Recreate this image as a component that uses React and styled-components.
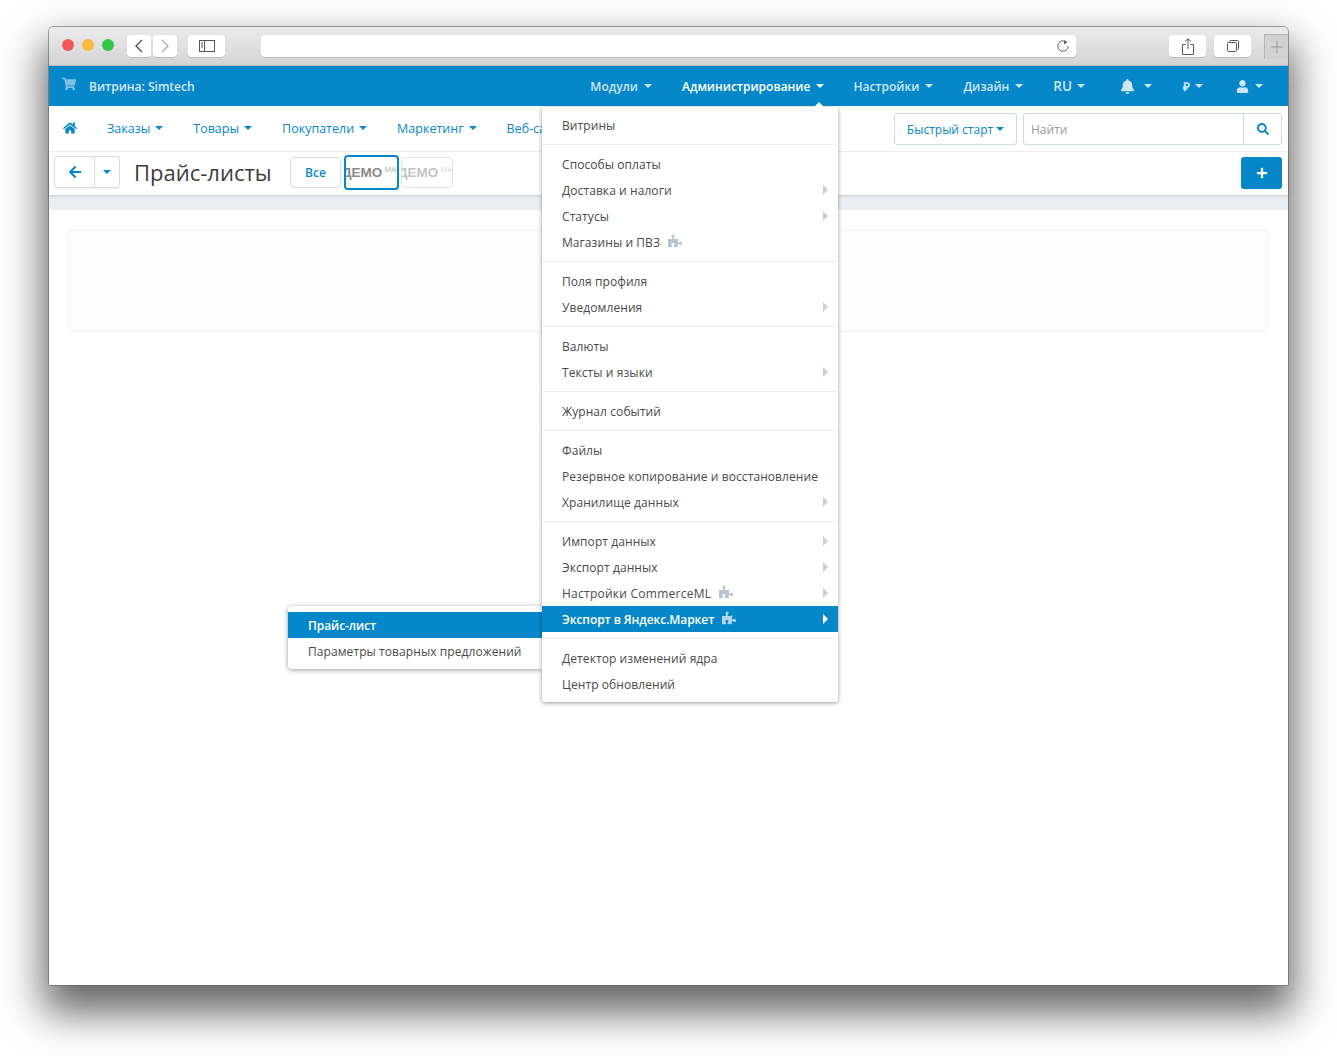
import React from "react";
import styled, { createGlobalStyle } from "styled-components";
import {
  FaShoppingCart,
  FaHome,
  FaArrowLeft,
  FaBell,
  FaUser,
  FaSearch,
  FaPlus,
  FaPuzzlePiece,
} from "react-icons/fa";

const GlobalStyle = createGlobalStyle`
  html, body {
    margin: 0;
    padding: 0;
    background: #fff;
    overflow: hidden;
  }
  * {
    box-sizing: border-box;
  }
`;

const Page = styled.div`
  width: 1337px;
  height: 1056px;
  padding: 27px 49px 71px 49px;
  font-family: "Open Sans", sans-serif;
  font-size: 13px;
`;

const Window = styled.div`
  position: relative;
  width: 1239px;
  height: 958px;
  background: #fff;
  border-radius: 5px 5px 2px 2px;
  box-shadow: 0 0 0 1px rgba(90, 90, 90, 0.55), 0 22px 40px 6px rgba(0, 0, 0, 0.6);
  display: flex;
  flex-direction: column;
`;

const Toolbar = styled.div`
  height: 39px;
  flex: none;
  padding: 8px 0 0 13px;
  display: flex;
  align-items: flex-start;
  background: linear-gradient(#ebebeb, #d4d4d4);
  border-bottom: 1px solid #b5b5b5;
  border-radius: 5px 5px 0 0;
`;

const Light = styled.span`
  width: 12px;
  height: 12px;
  margin: 4px 8px 0 0;
  border-radius: 50%;
  background: ${(p) => p.$color};
`;

const ToolButton = styled.div`
  width: ${(p) => p.$w}px;
  height: 22px;
  margin-left: ${(p) => p.$ml}px;
  display: flex;
  align-items: center;
  justify-content: center;
  background: #fff;
  border-radius: 4px;
  box-shadow: 0 1px 0 #bdbdbd;
`;

const AddressBar = styled(ToolButton)`
  justify-content: flex-end;
  padding-right: 6px;
`;

const NewTab = styled.div`
  width: 24px;
  height: 25px;
  margin: -1px 0 0 13px;
  display: flex;
  align-items: center;
  justify-content: center;
  background: #d2d2d2;
  border: 1px solid #b5b5b5;
  border-right: none;
  border-bottom: none;
`;

const TopBar = styled.div`
  height: 40px;
  flex: none;
  display: flex;
  align-items: center;
  padding: 0 25px 0 13px;
  background: #0587ca;
`;

const StoreLink = styled.div`
  display: flex;
  align-items: center;
  color: #d5e9f5;
  font-size: 12px;
  font-weight: 600;
  svg {
    margin: -4px 13px 0 0;
    color: #7fc0e4;
  }
`;

const TopNav = styled.div`
  margin-left: auto;
  display: flex;
  align-items: center;
`;

const TopItem = styled.div`
  margin-left: ${(p) => p.$ml ?? 30}px;
  display: flex;
  align-items: center;
  gap: ${(p) => p.$gap ?? 6}px;
  color: ${(p) => (p.$active ? "#fff" : "#cfe6f4")};
  font-weight: 600;
  font-size: 12px;
  white-space: nowrap;
`;

const LangItem = styled(TopItem)`
  font-size: 13.5px;
`;

const Caret = styled.span`
  width: 0;
  height: 0;
  flex: none;
  border-left: 4px solid transparent;
  border-right: 4px solid transparent;
  border-top: 4px solid ${(p) => p.$color || "currentColor"};
`;

const SubNav = styled.div`
  height: 46px;
  flex: none;
  display: flex;
  align-items: center;
  padding: 0 6px 0 14px;
  border-bottom: 1px solid #f2f3f4;
`;

const HomeLink = styled.div`
  width: 44px;
  display: flex;
  color: #0587ca;
  margin-top: -2px;
`;

const SubItem = styled.div`
  display: flex;
  align-items: center;
  gap: 5px;
  margin-right: 30px;
  padding-bottom: 1px;
  color: #0587ca;
  font-size: 12.5px;
  white-space: nowrap;
`;

const SubRight = styled.div`
  margin-left: auto;
  display: flex;
  gap: 6px;
`;

const OutlineButton = styled.div`
  height: 32px;
  width: 123px;
  padding-top: 1px;
  display: flex;
  align-items: center;
  justify-content: center;
  gap: 3px;
  color: #0587ca;
  font-size: 12px;
  background: #fff;
  border: 1px solid #ced8e0;
  border-radius: 3px;
`;

const Search = styled.div`
  width: 259px;
  height: 32px;
  display: flex;
  background: #fff;
  border: 1px solid #ced8e0;
  border-radius: 3px;
`;

const SearchField = styled.div`
  flex: 1;
  padding-left: 7px;
  line-height: 31px;
  color: #9a9a9a;
  font-size: 12px;
`;

const SearchButton = styled.div`
  width: 38px;
  display: flex;
  align-items: center;
  justify-content: center;
  color: #0587ca;
  border-left: 1px solid #ced8e0;
`;

const ActionBar = styled.div`
  height: 43px;
  flex: none;
  display: flex;
  align-items: center;
  padding: 0 6px 3px 5px;
  box-shadow: 0 1px 3px rgba(0, 0, 0, 0.14);
  position: relative;
`;

const BackGroup = styled.div`
  width: 66px;
  height: 32px;
  display: flex;
  color: #0587ca;
  border: 1px solid #d4dce3;
  border-radius: 3px;
  box-shadow: 0 1px 1px rgba(0, 0, 0, 0.06);
`;

const BackPart = styled.div`
  flex: ${(p) => p.$grow};
  display: flex;
  align-items: center;
  justify-content: center;
  & + & {
    border-left: 1px solid #d4dce3;
  }
`;

const Title = styled.h1`
  margin: 0 0 0 14px;
  width: 156px;
  font-size: 22px;
  font-weight: 400;
  color: #3d3d3d;
  white-space: nowrap;
`;

const FilterAll = styled.div`
  width: 51px;
  height: 31px;
  display: flex;
  align-items: center;
  justify-content: center;
  color: #0587ca;
  font-size: 12px;
  font-weight: 600;
  border: 1px solid #d4dce3;
  border-radius: 4px;
`;

const FilterLogo = styled.div`
  height: ${(p) => (p.$selected ? 35 : 31)}px;
  width: ${(p) => (p.$selected ? 55 : 52)}px;
  margin-left: ${(p) => (p.$selected ? 3 : 2)}px;
  display: flex;
  align-items: center;
  overflow: hidden;
  white-space: nowrap;
  opacity: ${(p) => (p.$selected ? 1 : 0.5)};
  font-family: "Liberation Sans", Arial, sans-serif;
  font-weight: 700;
  font-size: 13.5px;
  color: #8a8a8a;
  border: ${(p) => (p.$selected ? "2px solid #0587ca" : "1px solid #c4ccd3")};
  border-radius: 4px;
`;

const LogoMark = styled.span`
  flex: none;
  margin-left: -4px;
  display: flex;
  sup {
    margin: 0 0 0 2px;
    font-weight: 400;
    font-size: 8px;
    line-height: 10px;
    color: #b5b5b5;
  }
`;

const AddButton = styled.div`
  margin: 2px 0 0 auto;
  width: 41px;
  height: 32px;
  display: flex;
  align-items: center;
  justify-content: center;
  color: #fff;
  background: #0587ca;
  border-radius: 3px;
`;

const Band = styled.div`
  height: 15px;
  flex: none;
  background: #ebeef1;
`;

const Content = styled.div`
  flex: 1;
  padding: 20px 20px 0 19px;
  background: #fff;
`;

const EmptyBox = styled.div`
  height: 102px;
  background: #fdfdfd;
  border: 1px solid #f0f1f2;
  border-radius: 4px;
`;

const Menu = styled.div`
  position: absolute;
  left: 493px;
  top: 80px;
  width: 296px;
  padding: 5px 0;
  background: #fff;
  border-radius: 0 0 3px 3px;
  box-shadow: 0 1px 4px rgba(0, 0, 0, 0.4);
  color: #4a4a4a;
  font-size: 12px;
  letter-spacing: 0.08px;
  z-index: 5;
  &::before {
    content: "";
    position: absolute;
    top: -5px;
    left: 272px;
    border-left: 5px solid transparent;
    border-right: 5px solid transparent;
    border-bottom: 5px solid #fff;
  }
`;

const SubMenu = styled.div`
  position: absolute;
  left: 239px;
  top: 579px;
  width: 254px;
  padding: 6px 0 5px;
  background: #fff;
  border-radius: 4px 0 0 4px;
  box-shadow: 0 1px 5px rgba(0, 0, 0, 0.4);
  color: #4a4a4a;
  font-size: 12px;
  letter-spacing: 0.08px;
  z-index: 4;
`;

const MenuRow = styled.div`
  height: 26px;
  display: flex;
  align-items: center;
  gap: 8px;
  padding: 0 10px 0 20px;
  white-space: nowrap;
  background: ${(p) => (p.$active ? "#0587ca" : "transparent")};
  color: ${(p) => (p.$active ? "#fff" : "inherit")};
  font-weight: ${(p) => (p.$active ? 600 : 400)};
  letter-spacing: ${(p) => (p.$active ? "-0.07px" : p.$wide ? "0.25px" : "inherit")};
  svg {
    flex: none;
    margin-top: -2px;
    color: ${(p) => (p.$active ? "#b5d6ea" : "#b9c6d2")};
  }
`;

const RowArrow = styled.span`
  margin-left: auto;
  width: 0;
  height: 0;
  border-top: 5px solid transparent;
  border-bottom: 5px solid transparent;
  border-left: 5px solid ${(p) => (p.$active ? "#fff" : "#c9cfd5")};
`;

const Divider = styled.div`
  height: 1px;
  margin: 6px 1px;
  background: #ebebeb;
`;

const menuGroups = [
  [{ text: "Витрины" }],
  [
    { text: "Способы оплаты" },
    { text: "Доставка и налоги", arrow: true },
    { text: "Статусы", arrow: true },
    { text: "Магазины и ПВЗ", addon: true },
  ],
  [{ text: "Поля профиля" }, { text: "Уведомления", arrow: true }],
  [{ text: "Валюты" }, { text: "Тексты и языки", arrow: true }],
  [{ text: "Журнал событий" }],
  [
    { text: "Файлы" },
    { text: "Резервное копирование и восстановление" },
    { text: "Хранилище данных", arrow: true },
  ],
  [
    { text: "Импорт данных", arrow: true },
    { text: "Экспорт данных", arrow: true },
    { text: "Настройки CommerceML", addon: true, arrow: true, wide: true },
    { text: "Экспорт в Яндекс.Маркет", addon: true, arrow: true, active: true },
  ],
  [{ text: "Детектор изменений ядра" }, { text: "Центр обновлений" }],
];

const SafariIcon = ({ w, h, children }) => (
  <svg width={w} height={h} viewBox={`0 0 ${w} ${h}`} fill="none" stroke="#555" strokeWidth="1">
    {children}
  </svg>
);

const App = () => {
  return (
    <Page>
      <GlobalStyle />
      <Window>
        <Toolbar>
          <Light $color="#f4585a" />
          <Light $color="#fbbb40" />
          <Light $color="#33c748" />
          <ToolButton $w={24} $ml={5}>
            <SafariIcon w={10} h={16}>
              <path d="M8 2 2 8l6 6" strokeWidth="1.4" />
            </SafariIcon>
          </ToolButton>
          <ToolButton $w={24} $ml={2}>
            <SafariIcon w={10} h={16}>
              <path d="m2 2 6 6-6 6" stroke="#aaa" strokeWidth="1.4" />
            </SafariIcon>
          </ToolButton>
          <ToolButton $w={37} $ml={11}>
            <SafariIcon w={16} h={12}>
              <rect x="0.5" y="0.5" width="15" height="11" />
              <path d="M5.5 1v10M2 3h2M2 5h2M2 7h2" />
            </SafariIcon>
          </ToolButton>
          <AddressBar $w={815} $ml={36}>
            <SafariIcon w={14} h={14}>
              <path d="M10.5 3.2A5.2 5.2 0 1 0 12.2 7" stroke="#666" />
              <path d="M8 1l3.6 2.2L8 5.4z" fill="#666" stroke="none" />
            </SafariIcon>
          </AddressBar>
          <ToolButton $w={37} $ml={93}>
            <SafariIcon w={12} h={17}>
              <path d="M3.5 6.5H.5v10h11v-10h-3M6 11V1M3 3.5 6 .8l3 2.7" />
            </SafariIcon>
          </ToolButton>
          <ToolButton $w={37} $ml={8}>
            <SafariIcon w={12} h={12}>
              <rect x="0.5" y="2.5" width="9" height="9" rx="1" />
              <path d="M2.5 1.5a1 1 0 0 1 1-1h7a1 1 0 0 1 1 1v7a1 1 0 0 1-1 1" />
            </SafariIcon>
          </ToolButton>
          <NewTab>
            <SafariIcon w={12} h={12}>
              <path d="M6 0v12M0 6h12" stroke="#999" />
            </SafariIcon>
          </NewTab>
        </Toolbar>

        <TopBar>
          <StoreLink>
            <FaShoppingCart size={14} />
            Витрина: Simtech
          </StoreLink>
          <TopNav>
            <TopItem>
              Модули <Caret />
            </TopItem>
            <TopItem $active>
              Администрирование <Caret />
            </TopItem>
            <TopItem $ml={29}>
              Настройки <Caret />
            </TopItem>
            <TopItem $ml={30}>
              Дизайн <Caret />
            </TopItem>
            <LangItem $ml={30} $gap={5}>
              RU <Caret />
            </LangItem>
            <TopItem $ml={35} $gap={9}>
              <FaBell size={15} /> <Caret />
            </TopItem>
            <TopItem $ml={31} $gap={5}>
              ₽ <Caret />
            </TopItem>
            <TopItem $ml={33}>
              <FaUser size={13} /> <Caret />
            </TopItem>
          </TopNav>
        </TopBar>

        <SubNav>
          <HomeLink>
            <FaHome size={14} />
          </HomeLink>
          <SubItem>
            Заказы <Caret />
          </SubItem>
          <SubItem>
            Товары <Caret />
          </SubItem>
          <SubItem>
            Покупатели <Caret />
          </SubItem>
          <SubItem>
            Маркетинг <Caret />
          </SubItem>
          <SubItem>Веб-сайт</SubItem>
          <SubRight>
            <OutlineButton>
              Быстрый старт <Caret />
            </OutlineButton>
            <Search>
              <SearchField>Найти</SearchField>
              <SearchButton>
                <FaSearch size={12} />
              </SearchButton>
            </Search>
          </SubRight>
        </SubNav>

        <ActionBar>
          <BackGroup>
            <BackPart $grow={41}>
              <FaArrowLeft size={14} />
            </BackPart>
            <BackPart $grow={25}>
              <Caret />
            </BackPart>
          </BackGroup>
          <Title>Прайс-листы</Title>
          <FilterAll>Все</FilterAll>
          <FilterLogo $selected>
            <LogoMark>
              ДЕМО<sup>MAG</sup>
            </LogoMark>
          </FilterLogo>
          <FilterLogo>
            <LogoMark>
              ДЕМО<sup>MAG</sup>
            </LogoMark>
          </FilterLogo>
          <AddButton>
            <FaPlus size={12} />
          </AddButton>
        </ActionBar>

        <Band />
        <Content>
          <EmptyBox />
        </Content>

        <Menu>
          {menuGroups.map((group, i) => (
            <React.Fragment key={i}>
              {i > 0 && <Divider />}
              {group.map((item) => (
                <MenuRow key={item.text} $active={item.active} $wide={item.wide}>
                  {item.text}
                  {item.addon && <FaPuzzlePiece size={14} />}
                  {item.arrow && <RowArrow $active={item.active} />}
                </MenuRow>
              ))}
            </React.Fragment>
          ))}
        </Menu>

        <SubMenu>
          <MenuRow $active>Прайс-лист</MenuRow>
          <MenuRow>Параметры товарных предложений</MenuRow>
        </SubMenu>
      </Window>
    </Page>
  );
};

export default App;
